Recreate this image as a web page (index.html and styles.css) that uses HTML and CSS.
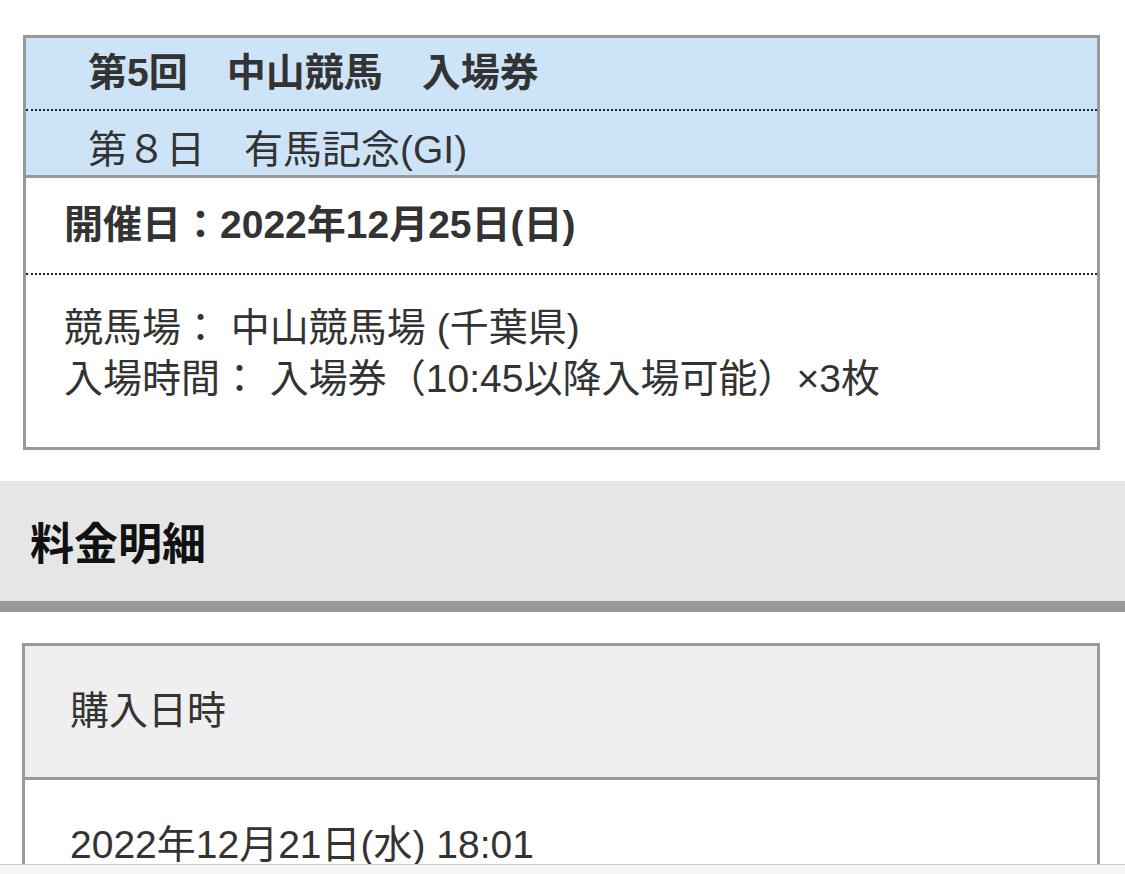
FILE: index.html
```html
<!DOCTYPE html>
<html lang="ja">

<head>
  <meta charset="utf-8">
  <meta name="viewport" content="width=device-width, initial-scale=1">
  <title>購入内容</title>

  <link rel="stylesheet" href="styles.css">
</head>

<body>
  <div class="ticket">
    <div class="ticket-head">
      <div class="ticket-title">第5回　中山競馬　入場券</div>
      <div class="ticket-sub">第８日　有馬記念(GI)</div>
    </div>
    <div class="ticket-date">開催日：2022年12月25日(日)</div>
    <div class="ticket-info">
      <p>競馬場： 中山競馬場 (千葉県)</p>
      <p>入場時間： 入場券（10:45以降入場可能）×3枚</p>
    </div>
  </div>

  <h2 class="section-title">料金明細</h2>

  <div class="detail">
    <div class="detail-head">購入日時</div>
    <div class="detail-body">2022年12月21日(水) 18:01</div>
  </div>

  <div class="bottom-bar"></div>
</body>

</html>
```

FILE: styles.css
```css
body {
  margin: 0;
  padding: 35px 0 0;
  font-family: "Liberation Sans", "Noto Sans CJK JP", sans-serif;
  color: #333;
  background: #fff;
}

.ticket {
  margin: 0 25px 0 23px;
  border: 3px solid #999;
}

.ticket-head {
  background: #cde4f8;
  border-bottom: 3px solid #999;
}

.ticket-title {
  font-size: 39px;
  font-weight: bold;
  line-height: 50px;
  padding: 10px 0 11px 62px;
  border-bottom: 2px dotted #222;
}

.ticket-sub {
  font-size: 39px;
  line-height: 50px;
  padding: 14px 0 0 62px;
}

.ticket-date {
  font-size: 39px;
  font-weight: bold;
  line-height: 52px;
  padding: 21px 0 22px 38px;
  border-bottom: 2px dotted #222;
}

.ticket-info {
  font-size: 39px;
  line-height: 51px;
  padding: 27px 0 43px 38px;
}

.ticket-info p {
  margin: 0;
}

.section-title {
  margin: 31px 0;
  height: 120px;
  display: flex;
  align-items: center;
  padding-left: 30px;
  font-size: 44px;
  font-weight: bold;
  color: #111;
  background: #e6e6e6;
  border-bottom: 11px solid #999;
}

.detail {
  margin: 0 25px 0 22px;
  border: 3px solid #999;
  border-bottom: none;
}

.detail-head,
.detail-body {
  font-size: 39px;
  line-height: 52px;
  padding: 39px 0 40px 45px;
}

.detail-head {
  background: #efefef;
  border-bottom: 3px solid #999;
}

.bottom-bar {
  position: fixed;
  left: 0;
  right: 0;
  bottom: 0;
  height: 9px;
  background: #f6f6f6;
  border-top: 1px solid #c8c8c8;
}
```
